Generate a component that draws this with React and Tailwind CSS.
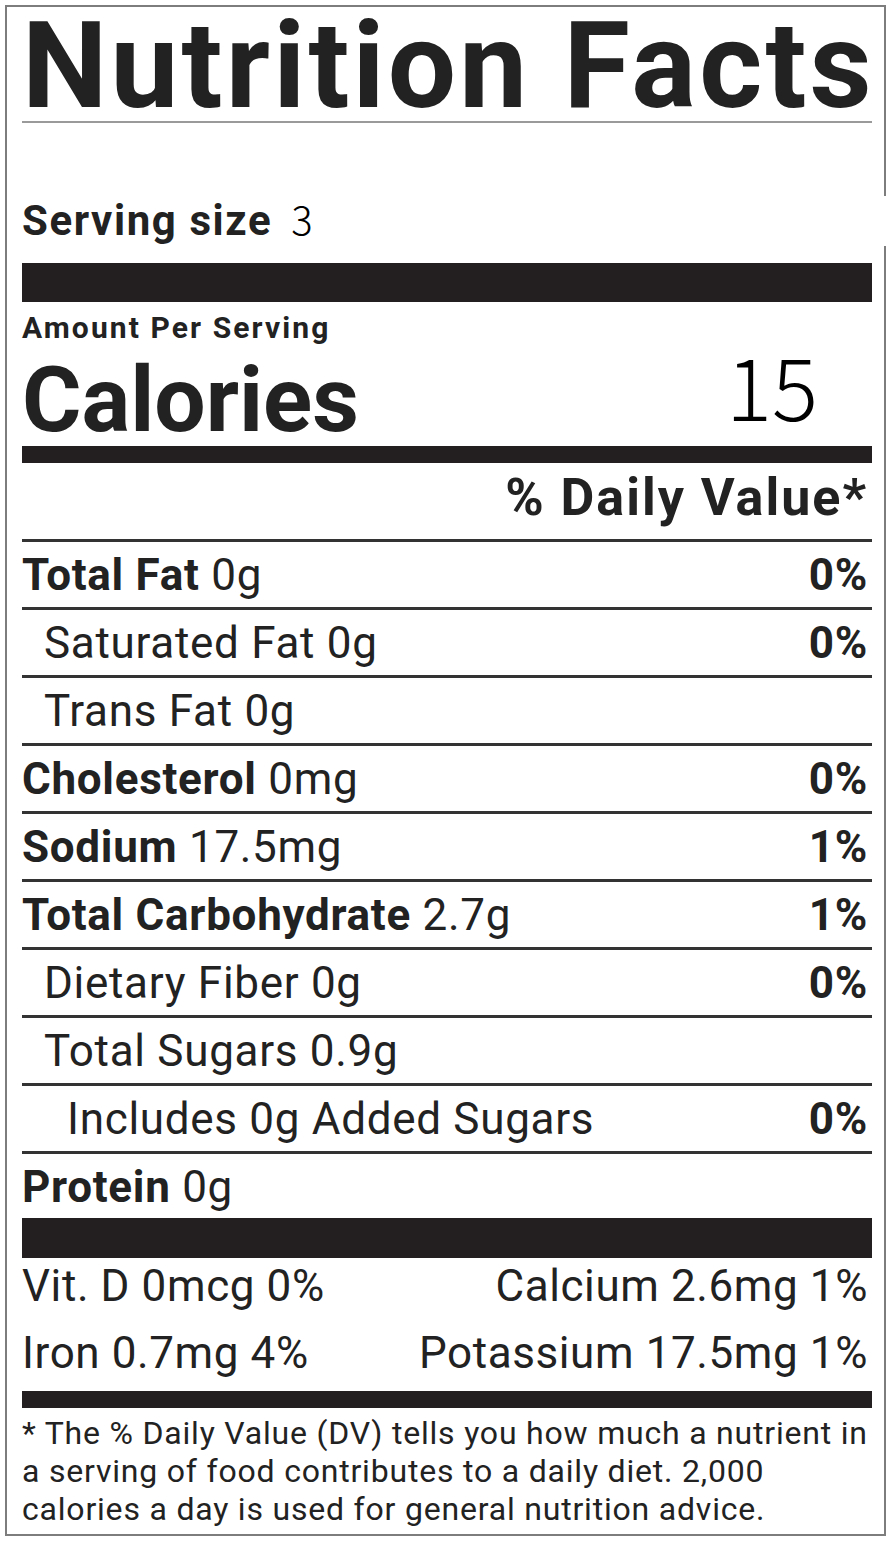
import React from "react";

const rows = [
  { b: "Total Fat", v: "0g", dv: "0%", indent: "" },
  { b: "", v: "Saturated Fat 0g", dv: "0%", indent: "pl-[22px]" },
  { b: "", v: "Trans Fat 0g", dv: "", indent: "pl-[22px]" },
  { b: "Cholesterol", v: "0mg", dv: "0%", indent: "" },
  { b: "Sodium", v: "17.5mg", dv: "1%", indent: "" },
  { b: "Total Carbohydrate", v: "2.7g", dv: "1%", indent: "" },
  { b: "", v: "Dietary Fiber 0g", dv: "0%", indent: "pl-[22px]" },
  { b: "", v: "Total Sugars 0.9g", dv: "", indent: "pl-[22px]" },
  { b: "", v: "Includes 0g Added Sugars", dv: "0%", indent: "pl-[45px]" },
];

export default function App() {
  return (
    <div className="w-[894px] h-[1548px] bg-white font-['Roboto',sans-serif] text-[#222]">
      <div className="relative ml-[5px] mt-[5px] w-[881px] border-2 border-[#7d7d7d] pl-[15px] pr-[12px] pb-[6px]">
        <div className="absolute right-[-3px] top-[189px] h-[50px] w-[4px] bg-white" />
        <div className="h-[114px] text-[121px] leading-[119px] font-bold whitespace-nowrap tracking-[3.2px]">
          Nutrition Facts
        </div>
        <div className="h-[2px] bg-[#9a9a9a]" />
        <div className="h-[140px] pt-[74px] text-[42px] leading-[42px] font-bold whitespace-nowrap tracking-[1.6px]">
          Serving size{" "}
          <span className="ml-[7px] tracking-normal font-['Noto_Sans_CJK_JP',sans-serif] font-light text-[40px] text-black">3</span>
        </div>
        <div className="h-[39px] bg-[#231f20]" />
        <div className="mt-[11px] text-[30px] leading-[30px] font-bold tracking-[2.1px] whitespace-nowrap">Amount Per Serving</div>
        <div className="mt-[8px] h-[91px] flex items-baseline justify-between">
          <span className="text-[91px] leading-[91px] font-bold">Calories</span>
          <span className="relative -top-[10px] mr-[54px] font-['Noto_Sans_CJK_JP',sans-serif] font-light text-[86px] leading-[86px] text-black">
            15
          </span>
        </div>
        <div className="mt-[4px] h-[17px] bg-[#231f20]" />
        <div className="mt-[9px] text-[52px] leading-[52px] font-bold text-right pr-[4px] tracking-[2px] whitespace-nowrap">% Daily Value*</div>
        <div className="mt-[15px]">
          {rows.map((r, i) => (
            <div
              key={i}
              className={`h-[68px] border-t-[3px] border-[#333] pt-[11px] flex justify-between text-[44px] leading-[44px] tracking-[0.7px] whitespace-nowrap ${r.indent}`}
            >
              <span>
                {r.b && <span className="font-bold">{r.b} </span>}
                {r.v}
              </span>
              <span className="font-bold pr-[4px]">{r.dv}</span>
            </div>
          ))}
          <div className="h-[67px] border-t-[3px] border-[#333] pt-[11px] text-[44px] leading-[44px] tracking-[0.7px]">
            <span className="font-bold">Protein </span>0g
          </div>
        </div>
        <div className="h-[40px] bg-[#231f20]" />
        <div className="mt-[6px] flex justify-between text-[44px] leading-[44px] tracking-[0.6px] whitespace-nowrap">
          <span>Vit. D 0mcg 0%</span>
          <span className="pr-[4px]">Calcium 2.6mg 1%</span>
        </div>
        <div className="mt-[23px] flex justify-between text-[44px] leading-[44px] tracking-[0.6px] whitespace-nowrap">
          <span>Iron 0.7mg 4%</span>
          <span className="pr-[4px]">Potassium 17.5mg 1%</span>
        </div>
        <div className="mt-[16px] h-[17px] bg-[#231f20]" />
        <div className="mt-[6px] text-[32px] leading-[38px] tracking-[0.8px] whitespace-nowrap">
          * The % Daily Value (DV) tells you how much a nutrient in
          <br />
          a serving of food contributes to a daily diet. 2,000
          <br />
          calories a day is used for general nutrition advice.
        </div>
      </div>
    </div>
  );
}
